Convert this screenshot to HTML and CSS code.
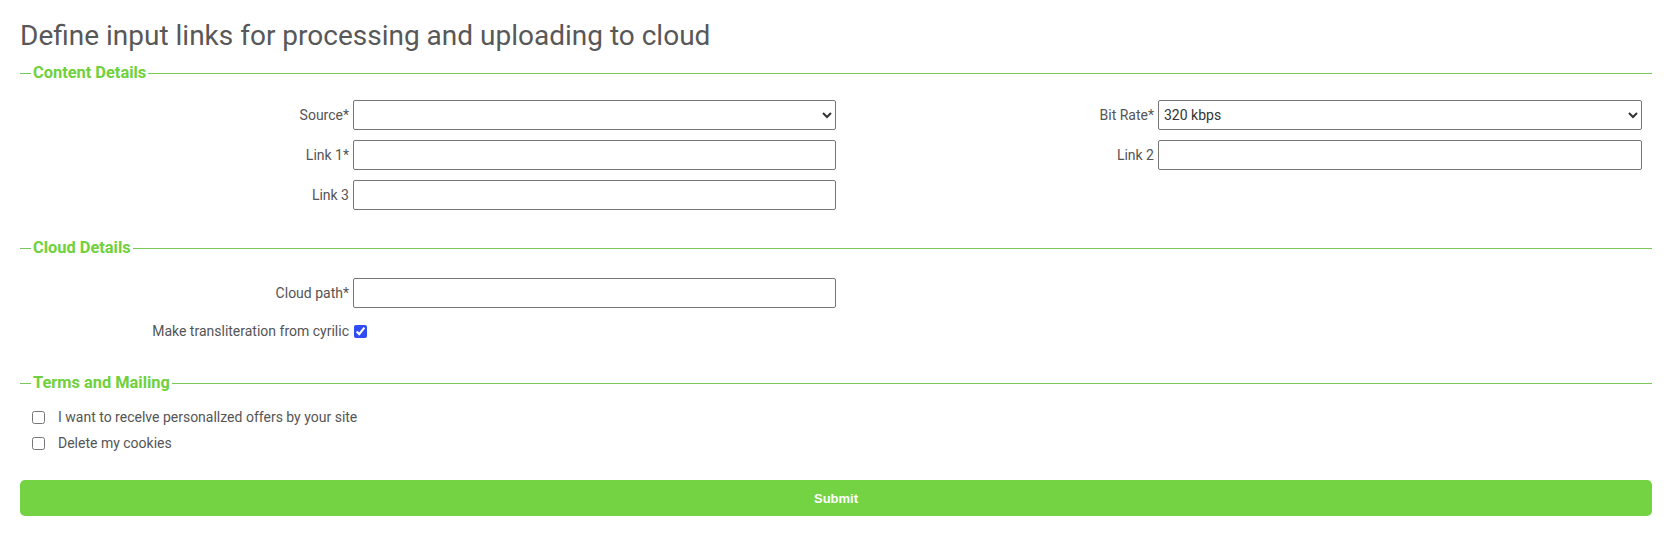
FILE: index.html
```html
<!DOCTYPE html>
<html lang="en">
<head>
<meta charset="utf-8">
<title>Define input links</title>
<link rel="stylesheet" href="styles.css">
</head>
<body>
<div class="page">
  <h1 class="title">Define input links for processing and uploading to cloud</h1>
  <form class="form">
    <fieldset class="section section-content">
      <legend class="legend">Content Details</legend>
      <div class="grid grid-four">
        <label class="label">Source*</label>
        <select class="control control-select"><option></option></select>
        <label class="label">Bit Rate*</label>
        <select class="control control-select"><option>320 kbps</option></select>

        <label class="label">Link 1*</label>
        <input class="control" type="text">
        <label class="label">Link 2</label>
        <input class="control" type="text">

        <label class="label">Link 3</label>
        <input class="control" type="text">
      </div>
    </fieldset>

    <fieldset class="section section-cloud">
      <legend class="legend">Cloud Details</legend>
      <div class="grid grid-two">
        <label class="label">Cloud path*</label>
        <input class="control" type="text">
        <label class="label">Make transliteration from cyrilic</label>
        <div class="check-cell"><input class="check check-on" type="checkbox" checked></div>
      </div>
    </fieldset>

    <fieldset class="section section-terms">
      <legend class="legend">Terms and Mailing</legend>
      <label class="check-row"><input class="check" type="checkbox"><span>I want to recelve personallzed offers by your site</span></label>
      <label class="check-row"><input class="check" type="checkbox"><span>Delete my cookies</span></label>
    </fieldset>

    <button class="submit" type="button">Submit</button>
  </form>
</div>
</body>
</html>
```

FILE: styles.css
```css
* { box-sizing: border-box; }

html, body {
  margin: 0;
  background: #ffffff;
}

body {
  font-family: Roboto, "Liberation Sans", Arial, sans-serif;
  color: #555555;
}

.page {
  padding: 19px 15px 0 20px;
}

.title {
  margin: 0;
  font-size: 28px;
  line-height: 33px;
  font-weight: 400;
  color: #585858;
}

.form {
  margin-top: 12px;
}

.section {
  border: 0;
  border-top: 1px solid #79c95a;
  margin: 0;
  padding: 0;
  min-width: 0;
}

.legend {
  margin-left: 11px;
  padding: 0 2px;
  font-size: 16.4px;
  line-height: 18px;
  font-weight: 700;
  color: #6fd13c;
}

.section-content {
  padding-top: 18px;
  padding-bottom: 29px;
}

.section-cloud {
  padding-top: 21px;
  padding-bottom: 30px;
}

.section-terms {
  padding-top: 12px;
  padding-bottom: 24px;
}

.grid {
  display: grid;
  row-gap: 10px;
  align-items: center;
}

.grid-four {
  grid-template-columns: 333px 483px 322px 484px;
  grid-auto-rows: 30px;
}

.grid-two {
  grid-template-columns: 333px 483px;
  grid-template-rows: 30px 26px;
}

.label {
  text-align: right;
  padding-right: 4px;
  font-size: 14px;
  line-height: 16px;
  color: #555555;
}

.control {
  height: 30px;
  width: 100%;
  margin: 0;
  border: 1px solid #767676;
  border-radius: 2px;
  background: #ffffff;
  font-family: Roboto, "Liberation Sans", Arial, sans-serif;
  font-size: 14px;
  color: #333333;
  padding: 0 4px;
}

.control-select {
  padding: 0 1px;
}

.check-cell {
  display: flex;
  align-items: center;
}

.check {
  width: 13px;
  height: 13px;
  margin: 0 0 0 1px;
}

.check-on {
  accent-color: #2f4cf5;
}

.check-row {
  display: flex;
  align-items: center;
  height: 26px;
  padding-left: 12px;
  font-size: 14px;
  color: #555555;
  gap: 13px;
}

.check-row .check {
  margin: 0;
}

.submit {
  display: block;
  width: 100%;
  height: 36px;
  border: 0;
  border-radius: 5px;
  background: #74d343;
  color: #ffffff;
  font-family: "Liberation Sans", Arial, sans-serif;
  font-size: 13px;
  font-weight: 700;
  cursor: pointer;
}
```
